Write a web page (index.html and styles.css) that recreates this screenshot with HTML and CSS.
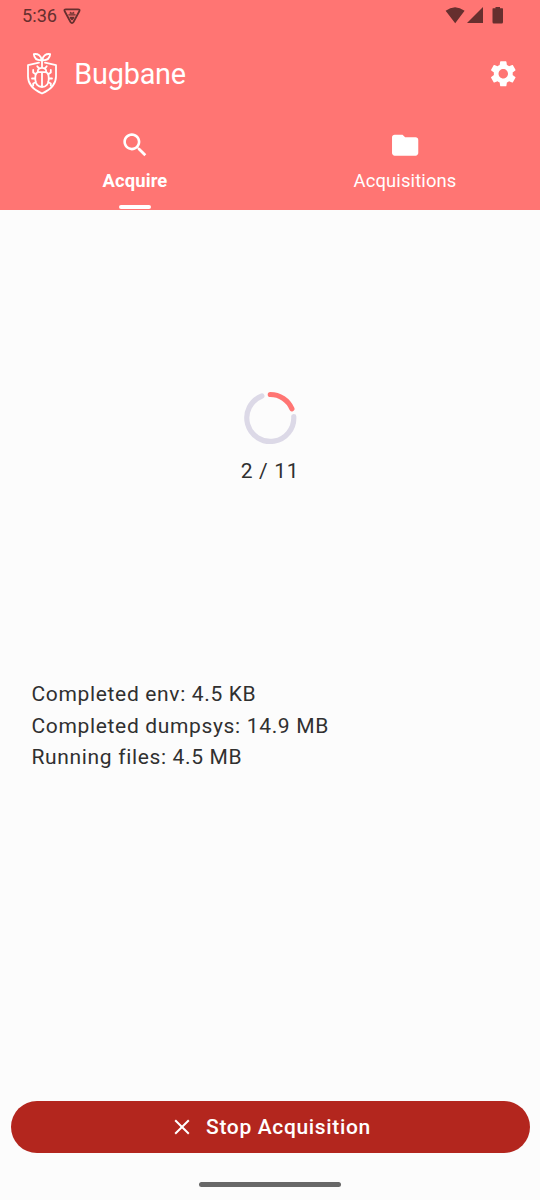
FILE: index.html
```html
<!DOCTYPE html>
<html lang="en">
<head>
<meta charset="utf-8">
<title>Bugbane</title>
<link rel="stylesheet" href="styles.css">
</head>
<body>
<div class="screen">
  <header class="header">
    <div class="status">
      <span class="clock">5:36</span>
      <svg class="debug-icon" width="18" height="17" viewBox="0 0 18 17"><path class="line" d="M3 1.3H15Q17.3 1.3 16.3 3.3L10.5 14Q9 16.2 7.5 14L1.7 3.3Q.7 1.3 3 1.3Z"/><path d="M6.6 5.8L7 3.6L8 4.4H10L11 3.6L11.4 5.8ZM5.4 6.2H12.6V7.6H5.4ZM6.4 8.8H11.6Q11 11.2 9 12.6Q7 11.2 6.4 8.8Z"/></svg>
      <span class="spacer"></span>
      <svg class="signals" width="59" height="18" viewBox="0 0 59 18"><path d="M.6 3.8Q10-3.4 19.6 3.8L10.2 16.3ZM38 0V16H22ZM48 1.2H50.5V0H55V1.2H57.5Q58 1.2 58 2.2V15Q58 16.5 56.7 16.5H48.8Q47.5 16.5 47.5 15V2.2Q47.5 1.2 48 1.2Z"/></svg>
    </div>
    <div class="toolbar">
      <svg class="logo" width="32" height="44" viewBox="0 0.5 32 44"><path d="M16 15.5V8.5M15.5 8.8C10.5 9 8.2 6.5 7.8 2.6C12 2 15.5 4.2 15.5 8.8ZM16.5 8.8C16.5 4.2 20 2 24.2 2.6C23.8 6.5 21.5 9 16.5 8.8ZM13 11.2L2 13.6V25C2 34 8 38.5 16 42C24 38.5 30 34 30 25V13.6L19 11.2M11.7 20Q12 16.3 16 16.3T20.3 20M9.3 26Q9.3 20.6 13 20.6H19Q22.7 20.6 22.7 26V28C22.7 32.5 20 35.5 16 35.5S9.3 32.5 9.3 28ZM16 21V35M13 16.8L11.3 14.8M19 16.8L20.7 14.8M10 23L7.2 21V18.5M22 23L24.8 21V18.5M9.3 27H6M22.7 27H26M10 30.5L7.2 32V34M22 30.5L24.8 32V34"/></svg>
      <h1 class="title">Bugbane</h1>
      <span class="spacer"></span>
      <svg class="icon" viewBox="-0.4 0 24 24"><path d="M19.14 12.94c.04-.3.06-.61.06-.94s-.02-.64-.07-.94l2.03-1.58c.18-.14.23-.41.12-.61l-1.92-3.32c-.12-.22-.37-.29-.59-.22l-2.39.96c-.5-.38-1.03-.7-1.62-.94l-.36-2.54c-.04-.24-.24-.41-.48-.41h-3.84c-.24 0-.43.17-.47.41l-.36 2.54c-.59.24-1.13.57-1.62.94l-2.39-.96c-.22-.08-.47 0-.59.22L2.74 8.87c-.12.21-.08.47.12.61l2.03 1.58c-.05.3-.09.63-.09.94s.02.64.07.94l-2.03 1.58c-.18.14-.23.41-.12.61l1.92 3.32c.12.22.37.29.59.22l2.39-.96c.5.38 1.03.7 1.62.94l.36 2.54c.05.24.24.41.48.41h3.84c.24 0 .44-.17.47-.41l.36-2.54c.59-.24 1.13-.56 1.62-.94l2.39.96c.22.08.47 0 .59-.22l1.92-3.32c.12-.22.07-.47-.12-.61l-2.01-1.58zM12 15.6c-1.98 0-3.6-1.62-3.6-3.6s1.62-3.6 3.6-3.6 3.6 1.62 3.6 3.6-1.62 3.6-3.6 3.6z"/></svg>
    </div>
    <nav class="tabs">
      <div class="tab tab-active">
        <svg class="icon" viewBox="-0.3 -0.3 24 24"><path d="M15.5 14h-.79l-.28-.27C15.41 12.59 16 11.11 16 9.5 16 5.91 13.09 3 9.5 3S3 5.91 3 9.5 5.91 16 9.5 16c1.61 0 3.09-.59 4.23-1.57l.27.28v.79l5 4.99L20.49 19l-4.99-5zm-6 0C7.01 14 5 11.99 5 9.5S7.01 5 9.5 5 14 7.01 14 9.5 11.99 14 9.5 14z"/></svg>
        <span class="tab-label">Acquire</span>
        <span class="indicator"></span>
      </div>
      <div class="tab">
        <svg class="icon" viewBox="-0.3 -0.3 24 24"><path d="M10 4H4c-1.1 0-1.99.9-1.99 2L2 18c0 1.1.9 2 2 2h16c1.1 0 2-.9 2-2V8c0-1.1-.9-2-2-2h-8l-2-2z"/></svg>
        <span class="tab-label">Acquisitions</span>
      </div>
    </nav>
  </header>
  <main class="content">
    <section class="progress">
      <svg class="ring" width="54" height="54" viewBox="0 0 54 54"><path class="track" d="M50.75 25.5A23.5 23.5 0 1 1 18.9 5"/><path class="value" d="M27.3 3.5A23.5 23.5 0 0 1 48.9 17.8"/></svg>
      <span class="count">2 / 11</span>
    </section>
    <section class="log">
      <div>Completed env: 4.5 KB</div>
      <div>Completed dumpsys: 14.9 MB</div>
      <div>Running files: 4.5 MB</div>
    </section>
  </main>
  <footer class="footer">
    <button class="stop"><svg width="16" height="16" viewBox="0 0 16 16"><path d="M1.2 1.2L14.8 14.8M14.8 1.2L1.2 14.8"/></svg><span class="stop-label">Stop Acquisition</span></button>
    <div class="home-bar"></div>
  </footer>
</div>
</body>
</html>
```
FILE: styles.css
```css
* { box-sizing: border-box; }
body { margin: 0; font-family: Roboto, sans-serif; background: #fcfcfc; }
.screen { width: 540px; height: 1200px; display: flex; flex-direction: column; color: #303030; }
.header { height: 210px; background: #ff7573; color: #fff; }
.spacer { flex: 1; }
.status { height: 32px; display: flex; align-items: center; padding: 0 36px 0 22px; color: #662f2e; }
.clock { font-size: 18.2px; line-height: 32px; }
.debug-icon { margin-left: 6px; fill: #662f2e; }
.line { fill: none; stroke: #662f2e; stroke-width: 1.8; }
.signals { fill: #662f2e; }
.toolbar { height: 84px; display: flex; align-items: center; padding: 0 21.5px 0 26px; }
.logo { fill: none; stroke: #fff; stroke-width: 1.8; stroke-linecap: round; stroke-linejoin: round; }
.title { margin: 0 0 0 16.3px; font-size: 28.8px; line-height: 36px; font-weight: 400; letter-spacing: -.2px; }
.icon { display: block; width: 31.5px; height: 31.5px; fill: #fff; }
.tabs { display: flex; height: 94px; }
.tab { flex: 1; display: flex; flex-direction: column; align-items: center; padding-top: 13px; }
.tab-label { margin-top: 7.5px; font-size: 18.4px; line-height: 26px; letter-spacing: .13px; }
.tab-active .tab-label { font-weight: 700; }
.indicator { width: 32px; height: 4px; margin-top: 10.5px; border-radius: 2px; background: #fff; }
.content { flex: 1; padding-top: 181px; font-size: 21px; line-height: 31.5px; letter-spacing: .66px; }
.progress { display: flex; flex-direction: column; align-items: center; height: 288px; }
.ring { fill: none; stroke-width: 5.2; stroke-linecap: round; }
.track { stroke: #dcd9e7; }
.value { stroke: #ff7573; }
.count { margin-top: 11px; }
.log { padding-left: 31.5px; }
.footer { height: 99.5px; padding: 0 10.5px; display: flex; flex-direction: column; align-items: center; }
.stop { width: 100%; height: 52.5px; border: 0; padding: 0 0 0 5px; border-radius: 26.25px; background: #b3261e; color: #fff; display: flex; align-items: center; justify-content: center; gap: 16px; font: 500 21px/31.5px Roboto, sans-serif; letter-spacing: .66px; }
.stop svg { fill: none; stroke: #fff; stroke-width: 2; }
.stop-label { padding-top: 2px; }
.home-bar { width: 142px; height: 5px; margin-top: 29px; border-radius: 2.5px; background: #686868; }
```
